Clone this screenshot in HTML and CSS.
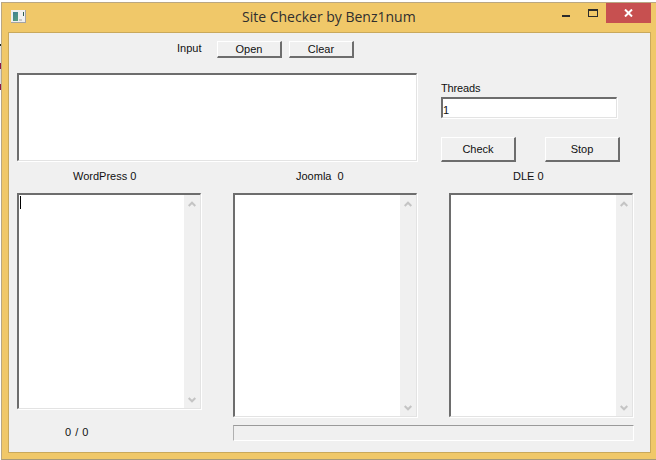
FILE: index.html
```html
<!DOCTYPE html>
<html lang="en">
<head>
<meta charset="utf-8">
<title>Site Checker by Benz1num</title>
<link rel="stylesheet" href="styles.css">
</head>
<body>
<div class="window">
  <header class="titlebar">
    <span class="app-icon"><i class="app-icon-pic"></i><i class="app-icon-tick"></i><i class="app-icon-box"></i></span>
    <h1 class="title">Site Checker by Benz1num</h1>
    <div class="caption">
      <span class="cap-btn cap-btn-min"><i class="cap-min"></i></span>
      <span class="cap-btn cap-btn-max"><i class="cap-max"></i></span>
      <span class="cap-close">
        <svg width="9" height="8" viewBox="0 0 9 8"><path d="M1 0.5 L8 7.5 M8 0.5 L1 7.5" stroke="#fff" stroke-width="2" fill="none"/></svg>
      </span>
    </div>
  </header>
  <main class="client">
    <div class="input-row">
      <span class="label input-label">Input</span>
      <button class="btn btn-small">Open</button>
      <button class="btn btn-small">Clear</button>
    </div>
    <div class="main-row">
      <div class="sunken urls"></div>
      <div class="side">
        <span class="label threads-label">Threads</span>
        <div class="sunken threads"><span class="label">1</span></div>
        <div class="actions">
          <button class="btn btn-large">Check</button>
          <button class="btn btn-large">Stop</button>
        </div>
      </div>
    </div>
    <div class="columns">
      <section class="col">
        <div class="label col-title title-wp">WordPress 0</div>
        <div class="sunken list list-short">
          <div class="list-body"><i class="caret"></i></div>
          <div class="scrollbar">
            <svg width="8" height="6" viewBox="0 0 8 6"><path d="M0.7 5 L4 1.7 L7.3 5" stroke="#c4c4c4" stroke-width="2" fill="none"/></svg>
            <svg width="8" height="6" viewBox="0 0 8 6"><path d="M0.7 1 L4 4.3 L7.3 1" stroke="#c4c4c4" stroke-width="2" fill="none"/></svg>
          </div>
        </div>
        <div class="label count">0 / 0</div>
      </section>
      <div class="right-area">
        <div class="right-lists">
          <section class="col">
            <div class="label col-title title-joomla">Joomla&nbsp; 0</div>
            <div class="sunken list">
              <div class="list-body"></div>
              <div class="scrollbar">
                <svg width="8" height="6" viewBox="0 0 8 6"><path d="M0.7 5 L4 1.7 L7.3 5" stroke="#c4c4c4" stroke-width="2" fill="none"/></svg>
                <svg width="8" height="6" viewBox="0 0 8 6"><path d="M0.7 1 L4 4.3 L7.3 1" stroke="#c4c4c4" stroke-width="2" fill="none"/></svg>
              </div>
            </div>
          </section>
          <section class="col">
            <div class="label col-title title-dle">DLE 0</div>
            <div class="sunken list">
              <div class="list-body"></div>
              <div class="scrollbar">
                <svg width="8" height="6" viewBox="0 0 8 6"><path d="M0.7 5 L4 1.7 L7.3 5" stroke="#c4c4c4" stroke-width="2" fill="none"/></svg>
                <svg width="8" height="6" viewBox="0 0 8 6"><path d="M0.7 1 L4 4.3 L7.3 1" stroke="#c4c4c4" stroke-width="2" fill="none"/></svg>
              </div>
            </div>
          </section>
        </div>
        <div class="progress"></div>
      </div>
    </div>
  </main>
</div>
</body>
</html>
```
FILE: styles.css
```css
* { box-sizing: border-box; }
html, body { margin: 0; padding: 0; background: #fff; }
body {
  width: 656px;
  height: 460px;
  overflow: hidden;
  padding: 2px 0 0 1px;
  background-image: linear-gradient(to bottom,
    #fff 44px, #1c2a1c 44px, #1c2a1c 46px,
    #e4e4e4 46px, #e4e4e4 63px,
    #8c1545 63px, #8c1545 69px,
    #dcdcdc 69px, #dcdcdc 84px,
    #8c1545 84px, #8c1545 90px,
    #fff 90px);
  background-size: 1px 100%;
  background-repeat: no-repeat;
}

.window {
  width: 656px;
  height: 458px;
  background: #f0c869;
  border: 1px solid #b9a783;
  border-right: 0;
  border-bottom-color: #a89a78;
  display: flex;
  flex-direction: column;
  padding: 0 6px 6px 6px;
}

.titlebar {
  height: 29px;
  flex: none;
  display: flex;
  align-items: flex-start;
  position: relative;
}
.app-icon {
  margin: 7px 0 0 3px;
  width: 15px;
  height: 13px;
  background: #f0f0f0;
  border-right: 1px solid #a3a3a3;
  border-bottom: 1px solid #a3a3a3;
  position: relative;
}
.app-icon-pic {
  position: absolute; left: 2px; top: 2px; width: 5px; height: 9px;
  background: linear-gradient(135deg, #3f7f94, #58a07c);
}
.app-icon-tick {
  position: absolute; left: 12px; top: 2px; width: 1px; height: 4px; background: #2f5d50;
}
.app-icon-box {
  position: absolute; left: 8px; top: 9px; width: 3px; height: 2px; background: #c8c8c8;
}
.title {
  margin: 0;
  position: absolute;
  left: 234px;
  top: 5px;
  font: 400 14px/18px "Open Sans", sans-serif;
  color: #2f2f2f;
  white-space: nowrap;
}
.caption {
  margin-left: auto;
  display: flex;
  align-items: flex-start;
  height: 20px;
}
.cap-btn {
  height: 20px;
  display: flex;
  justify-content: center;
}
.cap-btn-min { width: 28px; }
.cap-btn-max { width: 26px; }
.cap-min { width: 8px; height: 2px; background: #2b2b2b; margin-top: 12px; }
.cap-max { width: 10px; height: 8px; border: 1px solid #2b2b2b; border-top-width: 2px; margin-top: 6px; }
.cap-close {
  width: 45px;
  height: 20px;
  background: #c75050;
  display: flex;
  align-items: center;
  justify-content: center;
}

.client {
  flex: 1;
  background: #f0f0f0;
  border: 1px solid #c9a95c;
  padding: 8px 15px 0 8px;
  display: flex;
  flex-direction: column;
}

.label {
  font: 400 11px/14px "Liberation Sans", Arial, sans-serif;
  color: #111;
  white-space: nowrap;
}

.btn {
  margin: 0;
  padding: 0;
  background: #f0f0f0;
  font: 400 11px/14px "Liberation Sans", Arial, sans-serif;
  color: #111;
  border: 1px solid #fff;
  border-right: 2px solid #6d6d6d;
  border-bottom: 2px solid #6d6d6d;
}
.btn-small { width: 65px; height: 17px; }
.btn-large { width: 75px; height: 25px; }

.sunken {
  background: #fff;
  border-top: 2px solid #6d6d6d;
  border-left: 2px solid #6d6d6d;
  border-right: 1px solid #e3e3e3;
  border-bottom: 1px solid #e3e3e3;
  box-shadow: 1px 1px 0 #fff;
}

.input-row {
  height: 17px;
  display: flex;
  align-items: center;
  padding-left: 160px;
}
.input-label { width: 40px; margin-bottom: 3px; }
.input-row .btn + .btn { margin-left: 7px; }

.main-row {
  margin-top: 15px;
  display: flex;
  height: 89px;
}
.urls { width: 400px; height: 88px; }
.side {
  margin-left: 24px;
  width: 179px;
  display: flex;
  flex-direction: column;
}
.threads-label { margin: 8px 0 2px; height: 14px; letter-spacing: -0.15px; }
.threads { width: 176px; height: 21px; padding: 1px 0 0; }
.actions {
  margin-top: 19px;
  display: flex;
  gap: 29px;
}

.columns {
  display: flex;
  gap: 32px;
  margin-top: 7px;
}
.col { width: 184px; flex: none; }
.col-title { height: 14px; margin-bottom: 10px; }
.title-wp { padding-left: 56px; }
.title-joomla { padding-left: 63px; }
.title-dle { padding-left: 64px; }
.list {
  height: 224px;
  display: flex;
}
.list-short { height: 216px; }
.list-body { flex: 1; position: relative; }
.caret { display: block; width: 1px; height: 13px; background: #000; margin: 1px 0 0 1px; }
.scrollbar {
  width: 16px;
  background: #f0f0f0;
  display: flex;
  flex-direction: column;
  justify-content: space-between;
  align-items: center;
  padding: 6px 0 5px;
}
.count { margin: 16px 0 0 48px; word-spacing: 1px; }

.right-area { display: flex; flex-direction: column; }
.right-lists { display: flex; gap: 32px; }
.progress {
  margin-top: 8px;
  width: 401px;
  height: 16px;
  background: #f0f0f0;
  border-top: 1px solid #9a9a9a;
  border-left: 1px solid #b0b0b0;
  border-right: 1px solid #fff;
  border-bottom: 1px solid #fff;
}
```
